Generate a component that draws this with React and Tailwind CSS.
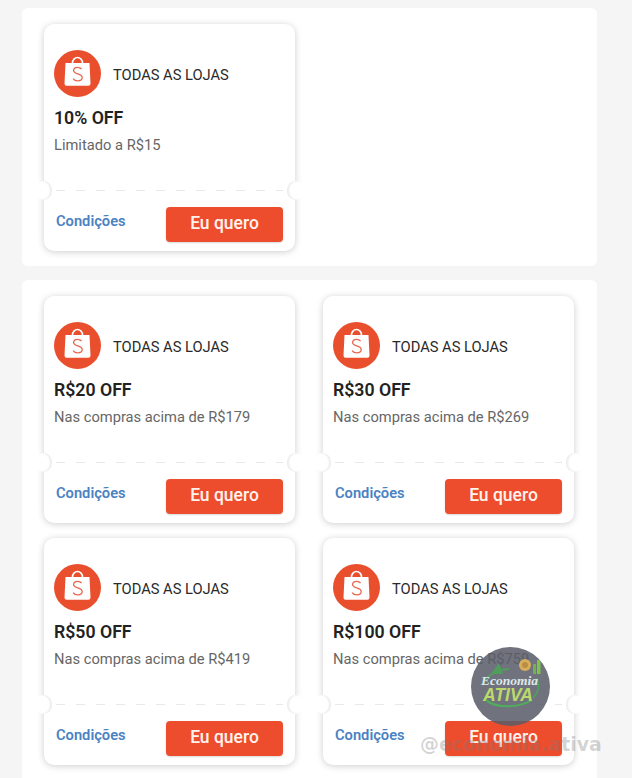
const font = { fontFamily: 'Roboto, "Liberation Sans", sans-serif' };

function Bag() {
  return (
    <svg width="47" height="47" viewBox="0 0 47 47" className="shrink-0">
      <circle cx="23.5" cy="23.5" r="23.5" fill="#ea4f2d" />
      <path d="M18.5 13a5 5.5 0 0 1 10 0" fill="none" stroke="#fff" strokeWidth="1.6" />
      <path d="M11.5 13h24l1 20.5a2.2 2.2 0 0 1-2.2 2.3H12.7a2.2 2.2 0 0 1-2.2-2.3z" fill="#fff" />
      <path d="M27.6 19.2c-.9-1.3-2.4-1.9-4-1.9-2.3 0-4 1.2-4 3.2 0 4.4 8.6 2.3 8.6 7.1 0 2.1-2.1 3.3-4.5 3.3-1.9 0-3.6-.8-4.6-2.3" fill="none" stroke="#e9694e" strokeWidth="1.3" />
    </svg>
  );
}

function Notch({ side }) {
  return (
    <div className={`absolute top-[157px] w-[17px] h-[19px] rounded-full bg-white ${side === "left" ? "left-[-9px] shadow-[inset_-2px_0_2px_rgba(0,0,0,0.08)]" : "right-[-9px] shadow-[inset_2px_0_2px_rgba(0,0,0,0.08)]"}`} />
  );
}

function Card({ title, sub }) {
  return (
    <div className="relative w-[251px] h-[227px] rounded-[10px] bg-white shadow-[0_1px_7px_rgba(0,0,0,0.2)] flex flex-col">
      <div className="flex-1 px-[10px] pt-[26px]">
        <div className="flex items-center gap-[12px]">
          <Bag />
          <span className="mt-[2px] text-[14.7px] leading-[20px] text-[#2a2a2a]">TODAS AS LOJAS</span>
        </div>
        <div className="mt-[8px] text-[17.7px] leading-[26px] font-semibold text-[#222]">{title}</div>
        <div className="mt-[4px] text-[14.7px] leading-[20px] text-[#666]">{sub}</div>
      </div>
      <div className="mx-[12px] h-[1px] bg-[repeating-linear-gradient(90deg,#e8e8e8_0,#e8e8e8_9px,transparent_9px,transparent_20px)]" />
      <div className="h-[60px] flex items-center justify-between pl-[12px] pr-[12px] pt-[6px]">
        <span className="mb-[6px] text-[14.7px] font-semibold text-[#4a82c3]">Condições</span>
        <div className="w-[117px] h-[35px] pb-[2px] rounded-[4px] bg-[#ee4d2d] text-[#fff3ee] text-[17.5px] font-medium flex items-center justify-center shadow-[0_1px_2px_rgba(0,0,0,0.15)]">Eu quero</div>
      </div>
      <Notch side="left" />
      <Notch side="right" />
    </div>
  );
}

export default function App() {
  return (
    <div className="relative w-[632px] h-[778px] overflow-hidden bg-[#f5f5f5] pt-[8px] pl-[22px]" style={font}>
      <div className="w-[575px] h-[258px] rounded-[6px] bg-white pt-[16px] pl-[22px]">
        <Card title="10% OFF" sub="Limitado a R$15" />
      </div>
      <div className="mt-[14px] w-[575px] h-[520px] rounded-[6px] bg-white pt-[16px] pl-[22px]">
        <div className="grid grid-cols-[251px_251px] gap-x-[28px] gap-y-[15px]">
          <Card title="R$20 OFF" sub="Nas compras acima de R$179" />
          <Card title="R$30 OFF" sub="Nas compras acima de R$269" />
          <Card title="R$50 OFF" sub="Nas compras acima de R$419" />
          <Card title="R$100 OFF" sub="Nas compras acima de R$759" />
        </div>
      </div>

      <div className="absolute left-[471px] top-[647px] w-[79px] h-[79px] rounded-full overflow-hidden bg-[rgba(88,92,104,0.86)] flex flex-col items-center">
        <svg width="79" height="79" viewBox="0 0 79 79" className="absolute left-0 top-0">
          <path d="M12 38c2-9 13-15 26-16" fill="none" stroke="#4f9e5c" strokeWidth="2" />
          <path d="M14 52c8 9 32 10 47 1" fill="none" stroke="#4fae5c" strokeWidth="2" />
          <path d="M66 31c3 8 1 15-4 20" fill="none" stroke="#4f9e5c" strokeWidth="1.8" />
          <rect x="62" y="17" width="3" height="10" fill="#6fb24f" />
          <rect x="66" y="13" width="3.5" height="14" fill="#7fc34f" />
          <path d="M20 27l8-11 4 11z" fill="#4f9e5c" />
          <circle cx="54" cy="18" r="6" fill="#d9ae5a" />
          <circle cx="54" cy="18" r="3" fill="#b98f45" />
        </svg>
        <div className="relative mt-[27px] ml-[-2px] text-[13.5px] leading-[14px] italic font-bold text-[#dfe8ea]" style={{ fontFamily: '"Liberation Serif", serif' }}>Economia</div>
        <div className="relative ml-[-5px] text-[17.5px] leading-[15px] italic font-bold text-[#bcd96c]" style={{ fontFamily: '"Liberation Sans", sans-serif' }}>ATIVA</div>
      </div>
      <div className="absolute left-[420px] top-[733px] text-[18.9px] leading-[22px] font-bold text-[rgba(120,120,120,0.33)]" style={{ fontFamily: '"DejaVu Sans", sans-serif' }}>@economia.ativa</div>
    </div>
  );
}
